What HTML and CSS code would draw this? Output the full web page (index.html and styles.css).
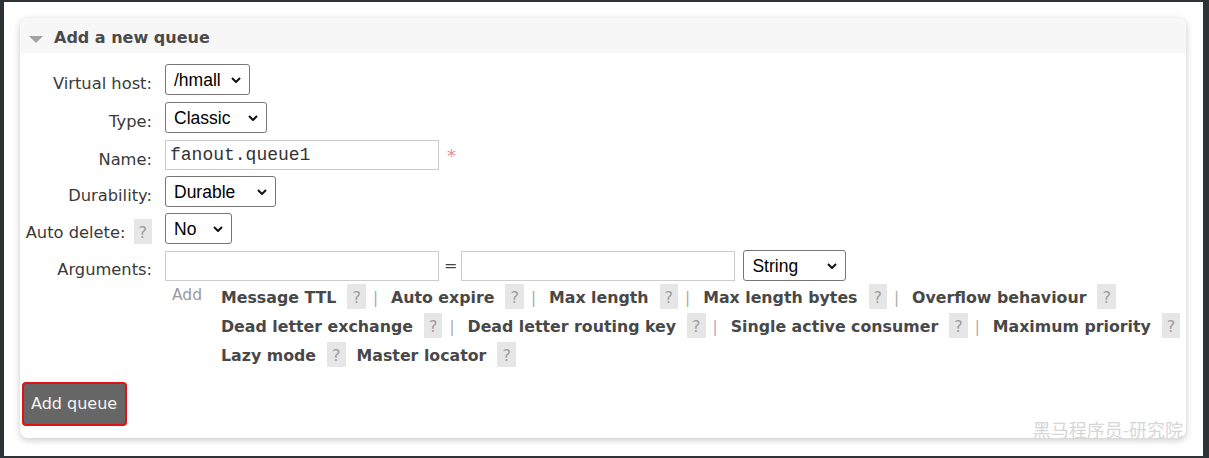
FILE: index.html
```html
<!DOCTYPE html>
<html lang="en">
<head>
<meta charset="utf-8">
<title>Add a new queue</title>
<link rel="stylesheet" href="styles.css">
</head>
<body>
<div class="frame">
  <section class="panel">
    <div class="panel-head">
      <svg class="tri" width="14" height="7" viewBox="0 0 14 7"><polygon points="0,0 14,0 7,7" fill="#a3a3a3"/></svg>
      <h2>Add a new queue</h2>
    </div>
    <div class="panel-body">
      <div class="form">
        <div class="lbl">Virtual host:</div>
        <div class="fld">
          <span class="sel"><select><option>/hmall</option><option>/</option></select><svg class="chev" width="10" height="6" viewBox="0 0 10 6"><polyline points="1,1 5,5 9,1" fill="none" stroke="#111" stroke-width="2"/></svg></span>
        </div>

        <div class="lbl">Type:</div>
        <div class="fld">
          <span class="sel"><select><option>Classic</option><option>Quorum</option><option>Stream</option></select><svg class="chev" width="10" height="6" viewBox="0 0 10 6"><polyline points="1,1 5,5 9,1" fill="none" stroke="#111" stroke-width="2"/></svg></span>
        </div>

        <div class="lbl">Name:</div>
        <div class="fld">
          <input class="txt mono" type="text" value="fanout.queue1">
          <span class="req">*</span>
        </div>

        <div class="lbl">Durability:</div>
        <div class="fld">
          <span class="sel"><select><option>Durable</option><option>Transient</option></select><svg class="chev" width="10" height="6" viewBox="0 0 10 6"><polyline points="1,1 5,5 9,1" fill="none" stroke="#111" stroke-width="2"/></svg></span>
        </div>

        <div class="lbl">Auto delete:<span class="help">?</span></div>
        <div class="fld">
          <span class="sel"><select><option>No</option><option>Yes</option></select><svg class="chev" width="10" height="6" viewBox="0 0 10 6"><polyline points="1,1 5,5 9,1" fill="none" stroke="#111" stroke-width="2"/></svg></span>
        </div>

        <div class="lbl">Arguments:</div>
        <div class="fld args">
          <div class="args-inputs">
            <input class="txt" type="text">
            <span class="eq">=</span>
            <input class="txt" type="text">
            <span class="sel sel-gap"><select><option>String</option><option>Number</option><option>Boolean</option><option>List</option></select><svg class="chev" width="10" height="6" viewBox="0 0 10 6"><polyline points="1,1 5,5 9,1" fill="none" stroke="#111" stroke-width="2"/></svg></span>
          </div>
          <div class="args-add">
            <span class="add">Add</span>
            <div class="arg-lines">
              <div class="arg-line">
                <span class="arg">Message TTL</span><span class="help">?</span><span class="sep">|</span>
                <span class="arg">Auto expire</span><span class="help">?</span><span class="sep">|</span>
                <span class="arg">Max length</span><span class="help">?</span><span class="sep">|</span>
                <span class="arg">Max length bytes</span><span class="help">?</span><span class="sep">|</span>
                <span class="arg">Overflow behaviour</span><span class="help">?</span>
              </div>
              <div class="arg-line">
                <span class="arg">Dead letter exchange</span><span class="help">?</span><span class="sep">|</span>
                <span class="arg">Dead letter routing key</span><span class="help">?</span><span class="sep">|</span>
                <span class="arg">Single active consumer</span><span class="help">?</span><span class="sep">|</span>
                <span class="arg">Maximum priority</span><span class="help">?</span>
              </div>
              <div class="arg-line">
                <span class="arg">Lazy mode</span><span class="help">?</span>
                <span class="arg arg-gap">Master locator</span><span class="help">?</span>
              </div>
            </div>
          </div>
        </div>
      </div>
      <button class="btn" type="button">Add queue</button>
    </div>
  </section>
  <div class="watermark">黑马程序员-研究院</div>
</div>
</body>
</html>
```

FILE: styles.css
```css
html, body {
  margin: 0;
  padding: 0;
}

body {
  background: #2d3237;
  font-family: "DejaVu Sans", Verdana, sans-serif;
  color: #3c3c3c;
}

.frame {
  position: relative;
  margin: 2px 6px 2px 4px;
  height: 454px;
  box-sizing: border-box;
  background: #fff;
  padding: 16px 17px 0 16px;
}

.panel {
  background: #fff;
  border-radius: 8px;
  box-shadow: 0 2px 7px rgba(0, 0, 0, 0.22);
}

.panel-head {
  display: flex;
  align-items: flex-start;
  height: 35px;
  box-sizing: border-box;
  padding: 10px 0 0 9px;
  background: #f7f7f7;
  border-radius: 8px 8px 0 0;
}

.tri {
  margin-top: 8px;
  flex: none;
}

.panel-head h2 {
  margin: 0 0 0 11px;
  font-size: 16px;
  font-weight: bold;
  line-height: 20px;
  color: #4a4a4a;
}

.panel-body {
  padding: 11px 6px 12px 2px;
}

.form {
  display: grid;
  grid-template-columns: 130px 1fr;
  grid-template-rows: 32px 32px 30px 31px 31px auto;
  column-gap: 13px;
  row-gap: 6px;
}

.lbl {
  padding-top: 10px;
  font-size: 16.3px;
  line-height: 20px;
  text-align: right;
  white-space: nowrap;
  color: #3a3a3a;
}

.lbl .help {
  margin-left: 8px;
  margin-top: -4px;
  margin-bottom: -2px;
}

.fld {
  display: flex;
  align-items: flex-start;
}

.sel {
  position: relative;
  display: inline-block;
  flex: none;
}

.sel select {
  -webkit-appearance: none;
  appearance: none;
  display: block;
  height: 31px;
  margin: 0;
  padding: 0 28px 0 8px;
  border: 1px solid #767676;
  border-radius: 3px;
  background: #fff;
  color: #000;
  font-family: "Liberation Sans", Arial, sans-serif;
  font-size: 17.5px;
}

.chev {
  position: absolute;
  right: 9px;
  top: 13px;
  pointer-events: none;
}

.txt {
  width: 274px;
  height: 30px;
  box-sizing: border-box;
  margin: 0;
  padding: 0 4px;
  border: 1px solid #cccccc;
  background: #fff;
  color: #333;
  font-family: "Liberation Mono", "Courier New", monospace;
  font-size: 18px;
}

.req {
  margin: 7px 0 0 8px;
  font-size: 18px;
  line-height: 18px;
  color: #ee8a8a;
}

.args {
  flex-direction: column;
  gap: 3px;
}

.args-inputs {
  display: flex;
  align-items: center;
  height: 31px;
}

.args-inputs .txt {
  height: 30px;
}

.eq {
  margin: 0 4px 0 5px;
  font-size: 16px;
  color: #444;
}

.sel-gap {
  margin-left: 8px;
}

.args-add {
  display: flex;
  align-items: flex-start;
}

.add {
  width: 56px;
  box-sizing: border-box;
  padding-left: 7px;
  margin-top: 2px;
  font-size: 15.5px;
  color: #9a9a9a;
  flex: none;
}

.arg-lines {
  display: flex;
  flex-direction: column;
}

.arg-line {
  display: flex;
  align-items: baseline;
  height: 29px;
  white-space: nowrap;
}

.arg {
  font-size: 15.8px;
  font-weight: bold;
  color: #484848;
}

.arg + .help {
  margin-left: 11px;
}

.arg-gap {
  margin-left: 11px;
}

.help {
  display: inline-block;
  padding: 4px 5px 2px;
  font-size: 16px;
  line-height: 19px;
  background: #e6e6e6;
  color: #9c9c9c;
  font-weight: normal;
}

.sep {
  margin: 0 13px 0 7px;
  font-size: 15px;
  color: #aaa;
}

.btn {
  display: block;
  margin-top: 11px;
  height: 44px;
  padding: 0 8px 0 7px;
  border: 2px solid #e31212;
  border-radius: 4px;
  background: #666;
  color: #f4f4f4;
  font-family: "DejaVu Sans", Verdana, sans-serif;
  font-size: 16px;
  line-height: 40px;
}

.watermark {
  position: absolute;
  right: 20px;
  top: 418px;
  font-family: "Noto Sans CJK SC", sans-serif;
  font-size: 18px;
  line-height: 18px;
  color: #d6d6d6;
}
```
